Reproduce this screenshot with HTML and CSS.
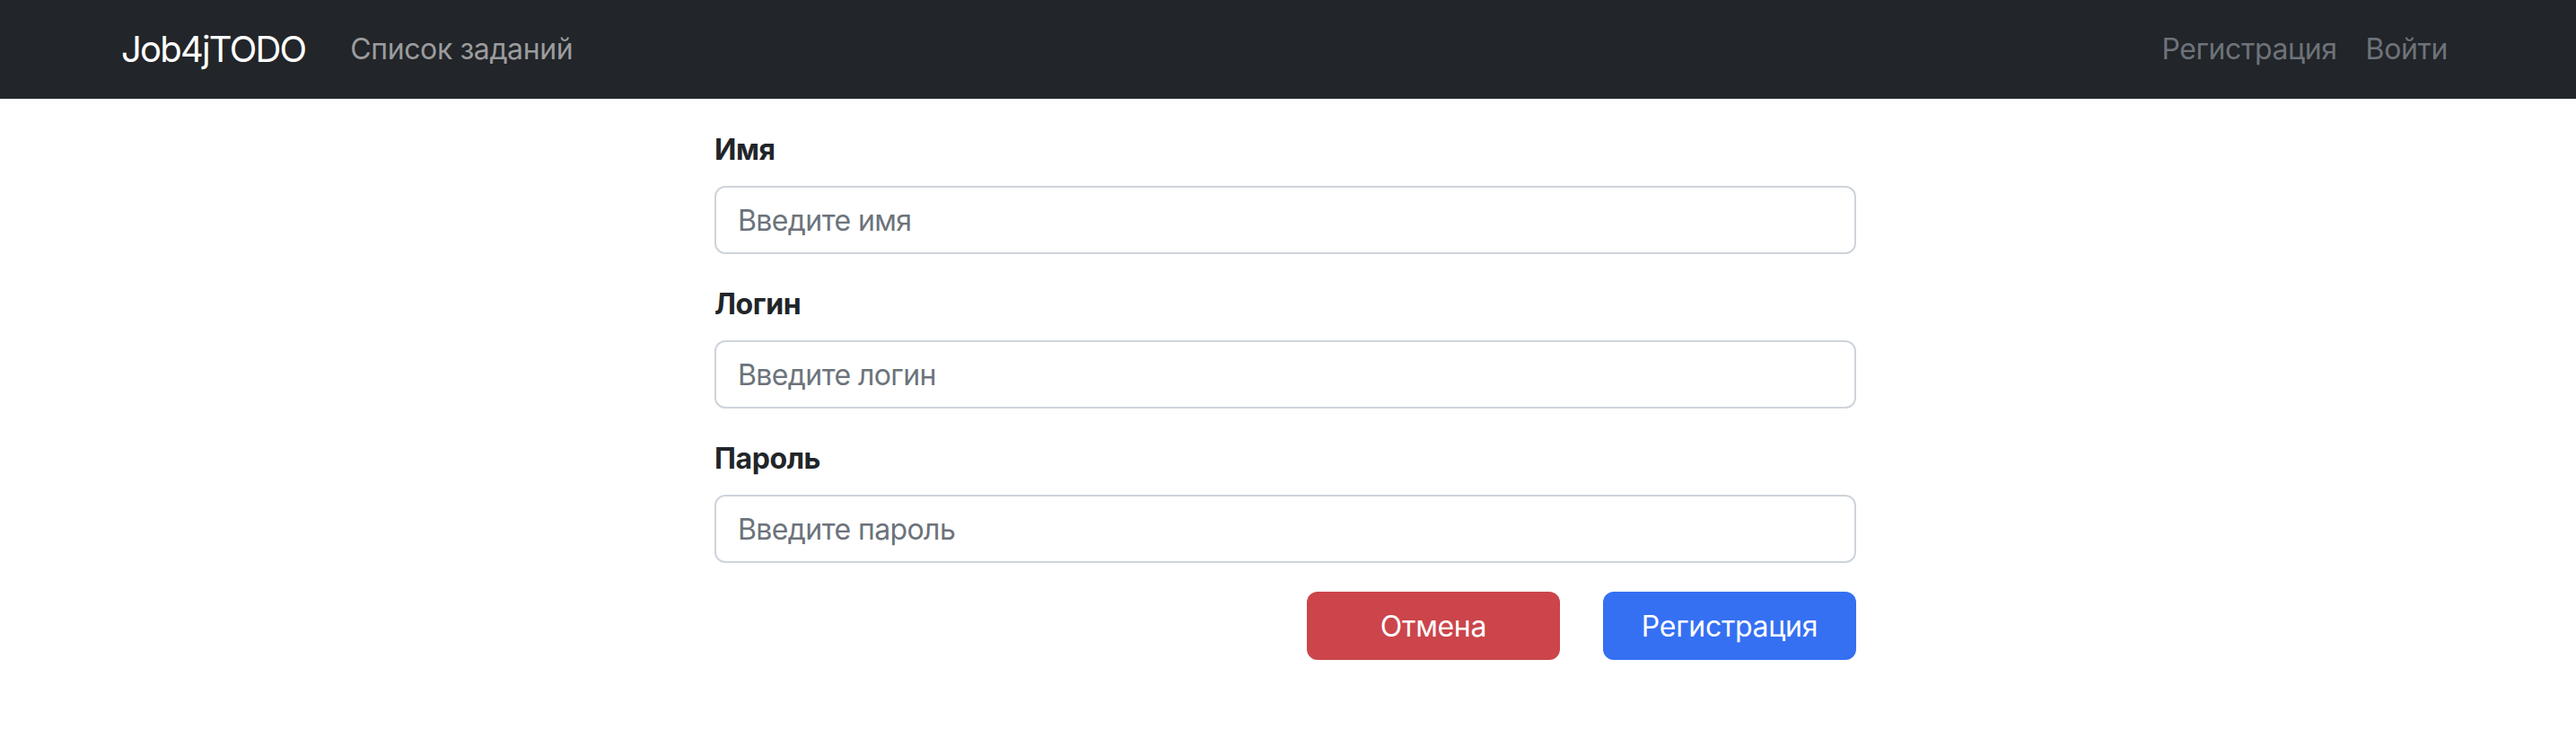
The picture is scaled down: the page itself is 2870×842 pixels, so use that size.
FILE: index.html
```html
<!DOCTYPE html>
<html lang="ru">
<head>
<meta charset="utf-8">
<title>Job4jTODO</title>
<link rel="stylesheet" href="styles.css">
</head>
<body>
<nav class="navbar">
  <div class="nav-left">
    <a class="brand" href="#">Job4jTODO</a>
    <a class="nav-link light" href="#">Список заданий</a>
  </div>
  <div class="nav-right">
    <a class="nav-link dim" href="#">Регистрация</a>
    <a class="nav-link dim" href="#">Войти</a>
  </div>
</nav>
<main class="page">
  <form class="form">
    <div class="group">
      <label class="label" for="name">Имя</label>
      <input class="input" id="name" type="text" placeholder="Введите имя">
    </div>
    <div class="group">
      <label class="label" for="login">Логин</label>
      <input class="input" id="login" type="text" placeholder="Введите логин">
    </div>
    <div class="group">
      <label class="label" for="password">Пароль</label>
      <input class="input" id="password" type="password" placeholder="Введите пароль">
    </div>
    <div class="actions">
      <button class="btn btn-danger" type="button">Отмена</button>
      <button class="btn btn-primary" type="submit">Регистрация</button>
    </div>
  </form>
</main>
</body>
</html>
```
FILE: styles.css
```css
* { box-sizing: border-box; }
html, body { margin: 0; padding: 0; background: #ffffff; }
body {
  font-family: Inter, "Noto Sans", "DejaVu Sans", sans-serif;
  color: #212529;
  letter-spacing: -0.4px;
}
a { text-decoration: none; }

.navbar {
  height: 110px;
  background: #222529;
  display: flex;
  align-items: center;
  justify-content: space-between;
  padding: 0 127px 0 135px;
}
.nav-left, .nav-right {
  display: flex;
  align-items: center;
}
.brand {
  color: #ffffff;
  font-size: 40px;
  line-height: 60px;
  letter-spacing: -1.8px;
  padding: 10px 0;
  margin-right: 34px;
}
.nav-link {
  font-size: 32px;
  line-height: 48px;
  letter-spacing: -0.4px;
  padding: 16px 16px;
}
.nav-link.light { color: #9b9c9e; }
.nav-link.dim { color: #6d737a; }

.page {
  display: flex;
  justify-content: center;
  padding-top: 33px;
  padding-right: 6px;
}
.form {
  width: 1272px;
  display: flex;
  flex-direction: column;
}
.group {
  display: flex;
  flex-direction: column;
  margin-bottom: 32px;
}
.label {
  font-size: 32px;
  line-height: 48px;
  font-weight: 700;
  color: #212529;
  margin-bottom: 16px;
}
.input {
  height: 76px;
  border: 2px solid #ced4da;
  border-radius: 12px;
  padding: 12px 24px;
  font-family: inherit;
  font-size: 32px;
  letter-spacing: -0.6px;
  color: #212529;
  background: #ffffff;
  outline: none;
}
.input::placeholder { color: #6c737b; opacity: 1; }

.actions {
  display: grid;
  grid-template-columns: repeat(4, 1fr);
  column-gap: 48px;
}
.btn {
  height: 76px;
  border: none;
  border-radius: 12px;
  font-family: inherit;
  font-size: 32px;
  letter-spacing: -0.3px;
  color: #ffffff;
  cursor: pointer;
}
.btn-danger { grid-column: 3; background: #cb454b; }
.btn-primary { grid-column: 4; background: #3570f3; }
```
